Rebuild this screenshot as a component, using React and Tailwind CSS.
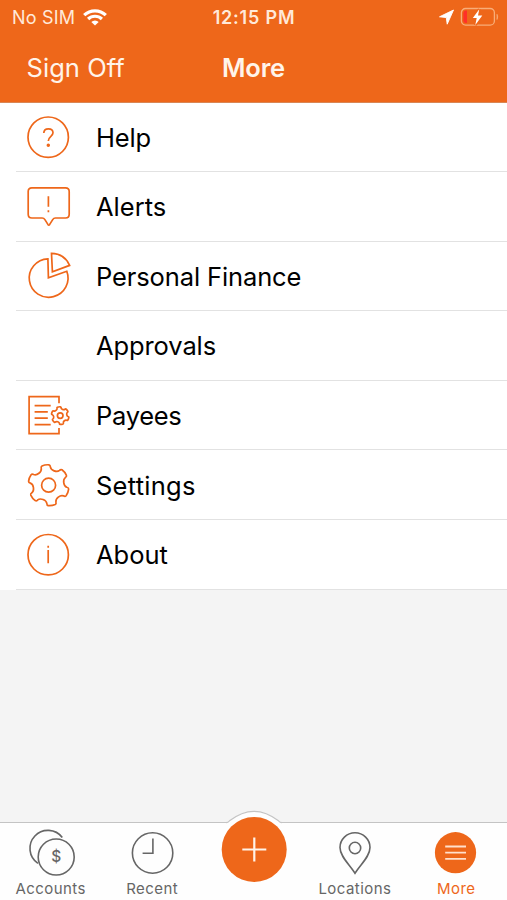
import React from "react";

const ORANGE = "#ee671a";

function gearPath(cx, cy, r) {
  const pt = (deg, k) => {
    const a = (deg * Math.PI) / 180;
    return `${(cx + r * k * Math.cos(a)).toFixed(2)} ${(cy + r * k * Math.sin(a)).toFixed(2)}`;
  };
  let d = "";
  for (let i = 0; i < 6; i++) {
    const a = -99 + i * 60;
    d += `${i ? "L" : "M"}${pt(a - 10, 1)} Q${pt(a, 1.03)} ${pt(a + 10, 1)} Q${pt(a + 14, 0.99)} ${pt(a + 14.5, 0.9)} C${pt(a + 18, 0.73)} ${pt(a + 42, 0.73)} ${pt(a + 45.5, 0.9)} Q${pt(a + 46, 0.99)} ${pt(a + 50, 1)} `;
  }
  return d + "Z";
}

function RowIcon({ children }) {
  return (
    <svg className="block h-[48px] w-[48px]" viewBox="0 0 48 48" fill="none" stroke={ORANGE} strokeWidth="1.7" strokeLinejoin="round" strokeLinecap="round">
      {children}
    </svg>
  );
}

const HelpIcon = () => (
  <RowIcon>
    <circle cx="24.2" cy="24.2" r="20.2" />
    <path d="M19.8 20.1C19.8 17.2 21.7 15.8 24.4 15.8C27.2 15.8 29 17.5 29 19.8C29 23.4 24.3 23.3 24.3 28" strokeLinecap="butt" />
    <circle cx="24.3" cy="32.2" r="0.9" fill={ORANGE} />
  </RowIcon>
);

const AlertIcon = () => (
  <RowIcon>
    <path d="M7.9 5.8H41.5Q45.2 5.8 45.2 9.5V32.3Q45.2 36 41.5 36H31.4Q29.7 36 28.7 37.6L25.7 42.4Q24.8 43.7 23.9 42.4L20.9 37.6Q19.9 36 18.2 36H7.9Q4.2 36 4.2 32.3V9.5Q4.2 5.8 7.9 5.8Z" />
    <path d="M24.4 14.3V24.7M24.4 28.3V30.3" strokeLinecap="butt" />
  </RowIcon>
);

const PieIcon = () => (
  <RowIcon>
    <path d="M23.9 6.9A19.4 19.2 0 1 0 42.8 19.3L24.4 25.8Z" strokeLinejoin="miter" />
    <path d="M27.5 1.4Q40.8 1.8 45.6 13.4L28.4 19.8Z" strokeLinejoin="miter" />
  </RowIcon>
);

const PayeesIcon = () => (
  <RowIcon>
    <path d="M35 12.2V5.7H5.1V42.7H35V36.9M10.6 14.7H26.7M10.6 20.9H23.8M10.6 27.1H23.8M10.6 33.7H26.7" strokeLinecap="butt" strokeLinejoin="miter" />
    <path d={gearPath(36.2, 24.6, 8.8)} />
    <circle cx="36.2" cy="24.6" r="2.8" />
  </RowIcon>
);

const SettingsIcon = () => (
  <RowIcon>
    <path d={gearPath(24.6, 24.2, 20.4)} />
    <circle cx="24.6" cy="24.2" r="7" />
  </RowIcon>
);

const AboutIcon = () => (
  <RowIcon>
    <circle cx="24.2" cy="24.7" r="20.2" />
    <path d="M24.2 20V33.2M24.2 15.8V17.8" strokeLinecap="butt" />
  </RowIcon>
);

const rows = [
  { label: "Help", Icon: HelpIcon, ls: "tracking-[-0.15px]" },
  { label: "Alerts", Icon: AlertIcon, ls: "tracking-[0px]" },
  { label: "Personal Finance", Icon: PieIcon, ls: "tracking-[-0.12px]" },
  { label: "Approvals", Icon: null, ls: "tracking-[-0.1px]" },
  { label: "Payees", Icon: PayeesIcon, ls: "tracking-[-0.3px]" },
  { label: "Settings", Icon: SettingsIcon, ls: "tracking-[0.25px]" },
  { label: "About", Icon: AboutIcon, ls: "tracking-[0px]" },
];

function StatusBar() {
  return (
    <div className="grid h-[34px] grid-cols-3 items-center pl-3 pr-[8px] text-[#ffe9d9]">
      <div className="flex items-center gap-[8px]">
        <span className="whitespace-nowrap text-[18px] tracking-[0.2px]">No SIM</span>
        <svg className="h-[17px] w-[24px]" viewBox="0 0 24 17" fill="none" stroke="#fff" strokeWidth="3.2">
          <path d="M1.2 6.2A15.5 15.5 0 0 1 22.8 6.2M5.1 10A10 10 0 0 1 18.9 10" />
          <path d="M12 16.6L8.3 13A5.3 5.3 0 0 1 15.7 13Z" fill="#fff" stroke="none" />
        </svg>
      </div>
      <div className="mr-[3px] whitespace-nowrap text-center text-[18px] font-semibold tracking-[0.8px]">12:15 PM</div>
      <div className="flex items-center justify-end gap-[6px]">
        <svg className="h-[16px] w-[15px]" viewBox="0 0 15 16" fill="#fff" stroke="#fff" strokeWidth=".9" strokeLinejoin="round">
          <path d="M14.5 1L8.2 15.2L7.3 8.6L.5 7.8Z" />
        </svg>
        <svg className="h-[20px] w-[39px]" viewBox="0 0 39 20" fill="none">
          <rect x="1.4" y="1.5" width="33" height="16.6" rx="4.2" stroke="#f8ad78" strokeWidth="1.3" />
          <path d="M37 7.3Q38.4 9.8 37 12.5Z" fill="#f8ad78" stroke="#f8ad78" strokeWidth=".7" />
          <path d="M3.4 6.3Q3.4 3.6 6 3.6H7V16H6Q3.4 16 3.4 13.3Z" fill="#ff3028" />
          <path d="M19.3 2.3L12.8 11H16.7L15.3 17.9L22.3 8.6H18Z" fill="#fff" stroke={ORANGE} strokeWidth="3" paintOrder="stroke" />
        </svg>
      </div>
    </div>
  );
}

function Tab({ label, active, children }) {
  return (
    <div className={`flex flex-1 flex-col items-center ${active ? "text-[#ee671a]" : "text-[#666]"}`}>
      <svg className="block h-[52px] w-[52px]" viewBox="0 0 52 52" fill="none" stroke="#666" strokeWidth="1.6">
        {children}
      </svg>
      <span className="whitespace-nowrap text-[15px] leading-5 tracking-[0.45px]">{label}</span>
    </div>
  );
}

export default function App() {
  return (
    <div className="flex h-[900px] w-[507px] flex-col overflow-hidden bg-[#f4f4f4] font-['Inter','Liberation_Sans',sans-serif]">
      <header className="h-[102.5px] shrink-0 border-b border-[#d88655] bg-[#ee671a]">
        <StatusBar />
        <div className="grid h-[68px] grid-cols-3 items-center text-[#fff4ea]">
          <span className="whitespace-nowrap pl-[26.5px] text-[25.5px] tracking-[0.05px]">Sign Off</span>
          <span className="text-center text-[25.5px] font-semibold tracking-[-0.15px]">More</span>
        </div>
      </header>

      <main className="flex-1">
        {rows.map(({ label, Icon, ls }) => (
          <div key={label} className="h-[69.6px] bg-white pl-4">
            <div className="flex h-full items-center border-b border-[#e2e2e2]">
              <div className="ml-2 h-[48px] w-[72px] shrink-0">{Icon && <Icon />}</div>
              <span className={`whitespace-nowrap pt-[2px] text-[25.5px] text-black ${ls}`}>{label}</span>
            </div>
          </div>
        ))}
      </main>

      <nav className="relative flex h-[78px] shrink-0 border-t border-[#c4c4c4] bg-[#fefefe] pt-[4px]">
        <Tab label="Accounts">
          <path d="M36.6 9.8A18 18 0 1 0 12.2 35.6" transform="translate(.7 .7)" />
          <circle cx="31.2" cy="30" r="18" />
          <text x="31.2" y="35.4" textAnchor="middle" fontSize="15.5" fill="#666" stroke="none" className="font-['Inter',sans-serif] font-medium">$</text>
        </Tab>
        <Tab label="Recent">
          <circle cx="26.6" cy="26" r="20.2" />
          <path d="M26.9 11.5V26.2H16.6" />
        </Tab>
        <div className="flex-1" />
        <Tab label="Locations">
          <path d="M26 46.3C20.5 37.5 11 29.5 11 20.5A15 14.7 0 0 1 41 20.5C41 29.5 31.5 37.5 26 46.3Z" />
          <circle cx="26" cy="21" r="5.7" />
        </Tab>
        <Tab label="More" active>
          <circle cx="25.5" cy="25.7" r="20.6" fill={ORANGE} stroke="none" />
          <path d="M15.2 19.5H36M15.2 25.7H36M15.2 31.9H36" stroke="#ffe0cc" strokeWidth="1.8" />
        </Tab>
        <svg className="absolute left-1/2 top-[-13px] h-[78px] w-[78px] -translate-x-1/2" viewBox="0 0 78 78" fill="none">
          <path d="M11 13.5Q39 -11.5 67 13.5V30H11Z" fill="#fefefe" />
          <path d="M11 12.7Q13 12.4 14.5 10.8Q39 -8.2 63.5 10.8Q65 12.4 67 12.7" stroke="#c4c4c4" strokeWidth="1.2" />
          <circle cx="39.2" cy="39.5" r="32.5" fill={ORANGE} />
          <path d="M39.3 27.5V51.5M27.3 39.5H51.3" stroke="#fff3e8" strokeWidth="2.2" />
        </svg>
      </nav>
    </div>
  );
}
